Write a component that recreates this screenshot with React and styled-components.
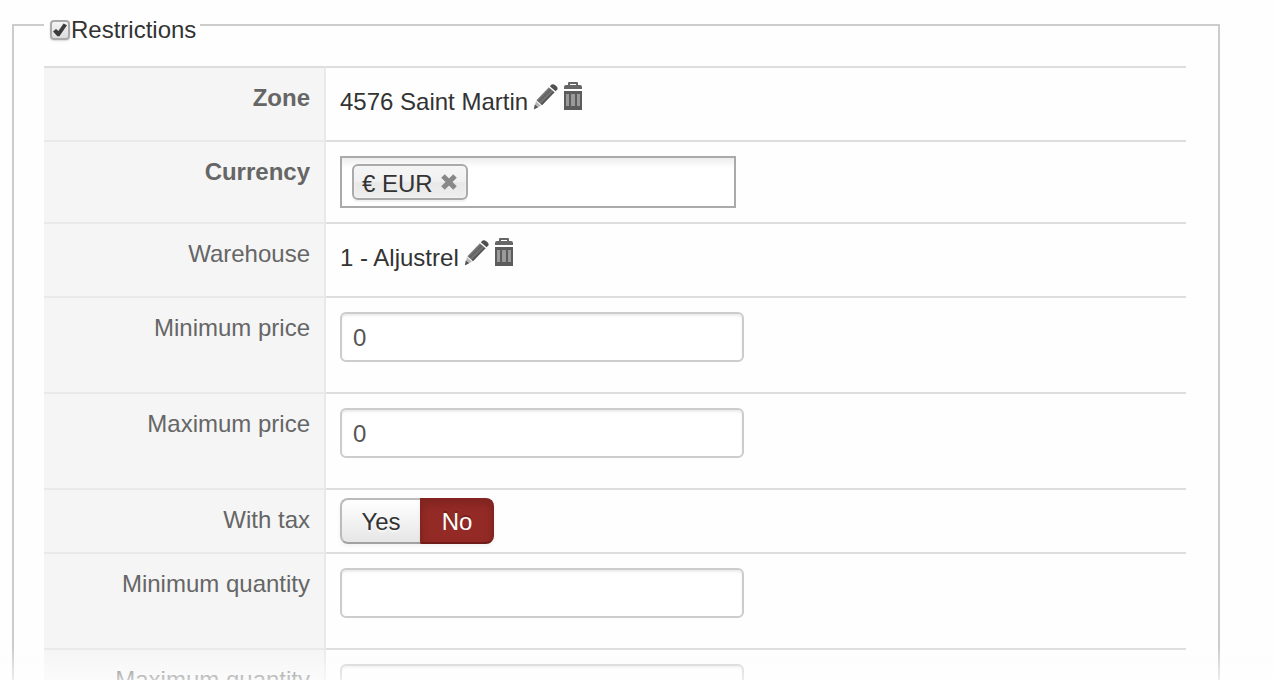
import React, { useState } from "react";
import styled, { createGlobalStyle } from "styled-components";

const Global = createGlobalStyle`
  *, *::before, *::after { box-sizing: border-box; }
  body {
    margin: 0;
    background: #fefefe;
    color: #333;
    font: 24px/36px "Liberation Sans", Arial, sans-serif;
  }
  button, input { font: inherit; color: inherit; }
`;

const Page = styled.main`
  height: 100vh;
  overflow: hidden;
  padding: 5px 54px 0 12px;
`;

const Fade = styled.div`
  position: fixed;
  left: 0;
  right: 0;
  bottom: 0;
  height: 34px;
  pointer-events: none;
  background: linear-gradient(rgba(254, 254, 254, 0), rgba(254, 254, 254, 0.66));
`;

const Group = styled.fieldset`
  min-width: 0;
  margin: 0;
  border: 2px solid #ccc;
  padding: 21px 32px 32px 30px;
`;

const Legend = styled.legend`
  padding: 10px 4px 0 6px;
  line-height: 30px;
`;

const CheckLabel = styled.label`
  display: flex;
  align-items: center;
  gap: 1px;
`;

const CheckWrap = styled.span`
  position: relative;
  display: block;
  width: 20px;
  height: 20px;

  svg {
    position: absolute;
    inset: 0;
    pointer-events: none;
  }
`;

const Checkbox = styled.input`
  appearance: none;
  display: block;
  width: 20px;
  height: 20px;
  margin: 0;
  border: 2px solid #aaa;
  border-radius: 4px;
  background: linear-gradient(#f4f4f4, #dcdcdc);
  box-shadow: 0 1px 2px rgba(0, 0, 0, 0.15);

  &:not(:checked) + svg { display: none; }
`;

const Row = styled.div`
  display: grid;
  grid-template-columns: 282px 1fr;
`;

const Name = styled.label`
  padding: 12px 14px 12px 0;
  border-top: 2px solid ${(p) => (p.$first ? "#ddd" : "#e9e9e9")};
  border-right: 2px solid #e9e9e9;
  background: #f5f5f5;
  color: #666;
  font-weight: ${(p) => (p.$bold ? 700 : 400)};
  text-align: right;
`;

const Value = styled.div`
  border-top: 2px solid #ddd;
  padding: ${(p) => (p.$tight ? "8px 14px" : "14px")};
`;

const Picked = styled.div`
  display: flex;
  align-items: flex-start;
  height: 44px;

  span {
    margin-right: 5px;
    padding-top: 2px;
  }
`;

const IconButton = styled.button`
  display: block;
  border: 0;
  padding: 0;
  margin-right: 5px;
  background: none;

  svg { display: block; }
`;

const TextInput = styled.input`
  display: block;
  width: 404px;
  max-width: 100%;
  height: 50px;
  margin: 0 0 16px;
  padding: 2px 11px 0;
  border: 2px solid #ccc;
  border-radius: 6px;
  background: #fff;
  color: #555;
  box-shadow: inset 0 2px 2px rgba(0, 0, 0, 0.075);
  outline: 0;
`;

const TokenBox = styled.div`
  display: flex;
  align-items: center;
  width: 396px;
  max-width: 100%;
  height: 52px;
  padding: 0 10px;
  border: 2px solid #aaa;
  background: linear-gradient(#eee, #fff 10px);
`;

const Token = styled.span`
  display: flex;
  align-items: center;
  gap: 7px;
  height: 36px;
  padding: 4px 8px 0;
  border: 2px solid #aaa;
  border-radius: 6px;
  background: linear-gradient(#f4f4f4 20%, #f0f0f0 50%, #e8e8e8 52%, #eee);
  box-shadow: inset 0 0 2px #fff, 0 2px 0 rgba(0, 0, 0, 0.05);
  white-space: nowrap;
`;

const Remove = styled.button`
  display: block;
  border: 0;
  padding: 0 0 4px;
  background: none;

  svg { display: block; }
`;

const TokenInput = styled.input`
  flex: 1;
  min-width: 0;
  border: 0;
  padding: 0 8px;
  background: none;
  outline: 0;
`;

const Switch = styled.div`
  display: flex;
  height: 46px;
`;

const SwitchButton = styled.button`
  width: ${(p) => (p.$end ? 74 : 80)}px;
  padding: 2px 0 0;
  border: 2px solid;
  border-color: ${(p) => (p.$on ? "#842320 #842320 #701c19" : "#bbb #bbb #a2a2a2")};
  border-right-width: ${(p) => (p.$end ? 2 : 0)}px;
  border-radius: ${(p) => (p.$end ? "0 8px 8px 0" : "8px 0 0 8px")};
  background: ${(p) => (p.$on ? "#942a25" : "linear-gradient(#fff, #e6e6e6)")};
  color: ${(p) => (p.$on ? "#fff" : "#333")};
  text-shadow: ${(p) => (p.$on ? "0 -2px 0 rgba(0, 0, 0, 0.25)" : "0 2px 2px rgba(255, 255, 255, 0.75)")};
  box-shadow: ${(p) =>
    p.$on
      ? "inset 0 4px 8px rgba(0, 0, 0, 0.15), 0 2px 4px rgba(0, 0, 0, 0.05)"
      : "0 2px 4px rgba(0, 0, 0, 0.05)"};
`;

const Check = () => (
  <svg width="20" height="20" viewBox="0 0 20 20" aria-hidden="true">
    <path d="M3 11.4 6 9 8.4 11 13.6 3.4 17 5.2 9.4 16.2 7.4 16.2Z" fill="#3c3c3c" />
  </svg>
);

const Pencil = () => (
  <svg width="25" height="28" viewBox="0 0 25 28" aria-hidden="true">
    <defs>
      <linearGradient id="shaft" x1="0" y1="0" x2="1" y2="1">
        <stop offset="0.34" stopColor="#888" />
        <stop offset="0.46" stopColor="#606060" />
        <stop offset="0.54" stopColor="#777" />
        <stop offset="0.64" stopColor="#444" />
      </linearGradient>
    </defs>
    <path d="M3.4 18.2 15.8 5.2 21.6 10.2 9 23.2Z" fill="url(#shaft)" />
    <path d="M3 19.2 8 23.8 1 27Z" fill="#b4b4b4" />
    <path d="M1.8 22.6 5.2 25.2 .8 27.4Z" fill="#555" />
    <path d="M16.8 4.2 18.6 2.6Q20.2 1.6 22 3L24 4.8Q25 6 24.4 7.2L22.6 9.2Z" fill="#505050" />
  </svg>
);

const Trash = () => (
  <svg width="20" height="28" viewBox="0 0 20 28" aria-hidden="true">
    <path d="M5 3V1Q5 0 6 0H14Q15 0 15 1V3H17Q19 3 19 5V7H1V5Q1 3 3 3ZM7 3H13V2H7Z" fill="#666" fillRule="evenodd" />
    <path d="M1 9H19V28H1Z" fill="#5c5c5c" />
    <path d="M3 12H6V24H3ZM8 12H12V24H8ZM14 12H17V24H14Z" fill="#9a9a9a" />
  </svg>
);

const Cross = () => (
  <svg width="18" height="18" viewBox="0 0 18 18" aria-hidden="true">
    <path d="M3 3 15 15M15 3 3 15" stroke="#888" strokeWidth="5" />
  </svg>
);

function PickedItem({ text }) {
  return (
    <Picked>
      <span>{text}</span>
      <IconButton type="button" aria-label="Edit"><Pencil /></IconButton>
      <IconButton type="button" aria-label="Delete"><Trash /></IconButton>
    </Picked>
  );
}

function TextRow({ id, label, value = "" }) {
  return (
    <Row>
      <Name htmlFor={id}>{label}</Name>
      <Value><TextInput id={id} type="text" defaultValue={value} /></Value>
    </Row>
  );
}

export default function App() {
  const [tax, setTax] = useState(false);
  return (
    <Page>
      <Global />
      <Group>
        <Legend>
          <CheckLabel>
            <CheckWrap>
              <Checkbox type="checkbox" defaultChecked />
              <Check />
            </CheckWrap>
            Restrictions
          </CheckLabel>
        </Legend>
        <Row>
          <Name as="div" $first $bold>Zone</Name>
          <Value><PickedItem text="4576 Saint Martin" /></Value>
        </Row>
        <Row>
          <Name htmlFor="currency" $bold>Currency</Name>
          <Value>
            <TokenBox>
              <Token>
                € EUR
                <Remove type="button" aria-label="Remove EUR"><Cross /></Remove>
              </Token>
              <TokenInput id="currency" type="text" />
            </TokenBox>
          </Value>
        </Row>
        <Row>
          <Name as="div">Warehouse</Name>
          <Value><PickedItem text="1 - Aljustrel" /></Value>
        </Row>
        <TextRow id="min-price" label="Minimum price" value="0" />
        <TextRow id="max-price" label="Maximum price" value="0" />
        <Row>
          <Name as="div" id="tax">With tax</Name>
          <Value $tight>
            <Switch role="group" aria-labelledby="tax">
              <SwitchButton type="button" $on={tax} aria-pressed={tax} onClick={() => setTax(true)}>Yes</SwitchButton>
              <SwitchButton type="button" $end $on={!tax} aria-pressed={!tax} onClick={() => setTax(false)}>No</SwitchButton>
            </Switch>
          </Value>
        </Row>
        <TextRow id="min-quantity" label="Minimum quantity" />
        <TextRow id="max-quantity" label="Maximum quantity" />
      </Group>
      <Fade />
    </Page>
  );
}
